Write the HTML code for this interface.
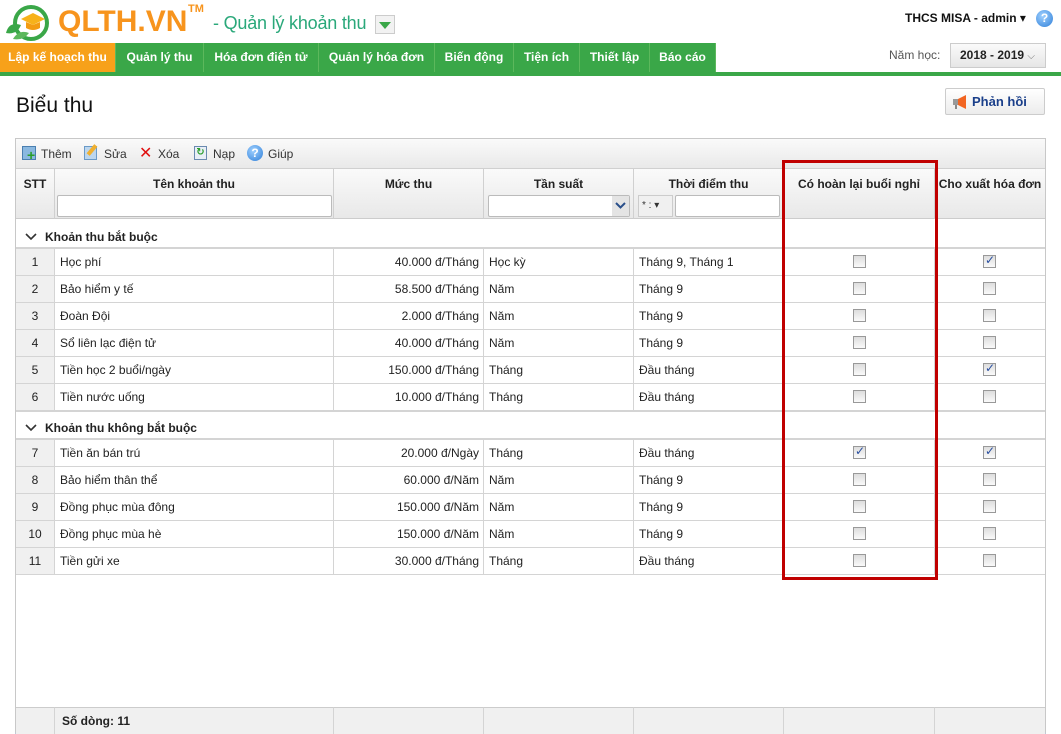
<!DOCTYPE html>
<html><head><meta charset="utf-8"><style>
*{box-sizing:border-box;margin:0;padding:0}
body{width:1061px;height:734px;overflow:hidden;background:#fff;font-family:"Liberation Sans","DejaVu Sans",sans-serif;font-size:12px;color:#222;position:relative}
.a{position:absolute}
.tab{position:absolute;top:43px;height:29px;line-height:29px;color:#fff;font-weight:bold;font-size:12px;text-align:center;border-right:1px solid #5cb85c}
.c{position:absolute;height:27px;line-height:26px;border-right:1px solid #d4d4d4;border-bottom:1px solid #d4d4d4;padding:0 5px;white-space:nowrap;overflow:hidden}
.cb{position:absolute;width:13px;height:13px;border:1px solid #999;background:linear-gradient(#ddd,#fafafa)}
.ck::after{content:"✓";position:absolute;left:1px;top:-3px;font-size:12px;color:#2a4fa0;font-weight:bold}
.h{position:absolute;top:169px;height:50px;background:linear-gradient(#fafafa,#e8e8e8);border-right:1px solid #d0d0d0;border-bottom:1px solid #ccc;font-weight:bold;text-align:center;padding-top:8px;font-size:12px}
.f{position:absolute;top:707px;height:27px;background:#f0f0f0;border-right:1px solid #d4d4d4;border-top:1px solid #ccc}
</style></head><body>
<svg class="a" style="left:3px;top:3px" width="52" height="40" viewBox="0 0 52 40">
<circle cx="28" cy="20" r="16" fill="none" stroke="#3aa748" stroke-width="4"/>
<path d="M3 30 Q6 18 18 22 Q14 32 3 30Z" fill="#3aa748"/>
<path d="M10 36 Q16 26 26 30 Q20 38 10 36Z" fill="#5cb85c"/>
<path d="M18 16 L30 10 L42 16 L30 22Z" fill="#f7b21a"/>
<path d="M23 19 L23 25 Q30 29 37 25 L37 19 L30 22Z" fill="#f39c12"/>
</svg>
<div class="a" style="left:58px;top:5px;font-size:30px;font-weight:bold;color:#f7941d">QLTH.VN</div>
<div class="a" style="left:188px;top:3px;font-size:11px;font-weight:bold;color:#f7941d">TM</div>
<div class="a" style="left:213px;top:13px;font-size:18px;color:#2aa87a;letter-spacing:-0.2px">- Quản lý khoản thu</div>
<div class="a" style="left:375px;top:15px;width:20px;height:19px;border:1px solid #ccc;background:#f2f2f2"><div class="a" style="left:3px;top:6px;border-left:6px solid transparent;border-right:6px solid transparent;border-top:7px solid #3aa748"></div></div>
<div class="a" style="left:905px;top:11px;font-weight:bold;font-size:12px;color:#111">THCS MISA - admin ▾</div>
<div class="a" style="left:1036px;top:10px;width:17px;height:17px;border-radius:50%;background:radial-gradient(circle at 40% 35%,#9fd0ff,#2f7fd8);color:#fff;font-weight:bold;font-size:12px;text-align:center;line-height:17px">?</div>
<div class="a" style="left:0;top:72px;width:1061px;height:4px;background:#3aa748"></div>
<div class="tab" style="left:0;width:116px;background:#f7a11a">Lập kế hoạch thu</div>
<div class="tab" style="left:116px;width:88px;background:#3aa748">Quản lý thu</div>
<div class="tab" style="left:204px;width:115px;background:#3aa748">Hóa đơn điện tử</div>
<div class="tab" style="left:319px;width:116px;background:#3aa748">Quản lý hóa đơn</div>
<div class="tab" style="left:435px;width:79px;background:#3aa748">Biến động</div>
<div class="tab" style="left:514px;width:66px;background:#3aa748">Tiện ích</div>
<div class="tab" style="left:580px;width:70px;background:#3aa748">Thiết lập</div>
<div class="tab" style="left:650px;width:66px;background:#3aa748">Báo cáo</div>
<div class="a" style="left:889px;top:48px;color:#555">Năm học:</div>
<div class="a" style="left:950px;top:43px;width:96px;height:25px;border:1px solid #ccc;background:linear-gradient(#fafafa,#e6e6e6);font-weight:bold;line-height:23px;padding-left:9px;font-size:12px">2018 - 2019 <span style="font-weight:normal;color:#777;font-size:10px">⌵</span></div>
<div class="a" style="left:16px;top:94px;font-size:21px;color:#111">Biểu thu</div>
<div class="a" style="left:945px;top:88px;width:100px;height:27px;border:1px solid #ccc;border-radius:2px;background:linear-gradient(#fff,#ececec);font-weight:bold;color:#1a3f8a;font-size:13px;line-height:25px;padding-left:26px">Phản hồi</div>
<svg class="a" style="left:952px;top:95px" width="18" height="14"><rect x="1" y="4" width="5" height="6" fill="#999"/><path d="M6 4 L14 0 L14 14 L6 10Z" fill="#f26522"/><rect x="3" y="10" width="2" height="4" fill="#888"/></svg>
<div class="a" style="left:15px;top:138px;width:1031px;height:596px;border:1px solid #c8c8c8;border-bottom:2px solid #b8cbe0"></div>
<div class="a" style="left:16px;top:139px;width:1029px;height:30px;background:linear-gradient(#fafafa,#e9e9e9);border-bottom:1px solid #d0d0d0"></div>
<div class="a" style="left:22px;top:146px;width:14px;height:14px;background:#8ab8e0;border:1px solid #4a7fb0"></div><div class="a" style="left:27px;top:149px;color:#2a9d2a;font-weight:bold;font-size:14px;line-height:12px">+</div>
<div class="a" style="left:41px;top:147px;color:#333">Thêm</div>
<div class="a" style="left:84px;top:146px;width:13px;height:14px;background:#bcd6ee;border:1px solid #6a9ac8"></div><div class="a" style="left:90px;top:144px;width:4px;height:12px;background:#f0b030;transform:rotate(40deg)"></div>
<div class="a" style="left:104px;top:147px;color:#333">Sửa</div>
<div class="a" style="left:139px;top:143px;color:#e01010;font-size:16px;font-weight:bold">✕</div>
<div class="a" style="left:158px;top:147px;color:#333">Xóa</div>
<div class="a" style="left:194px;top:146px;width:13px;height:14px;background:#e8eef6;border:1px solid #6a8ab0;color:#2a9d2a;font-size:10px;text-align:center;line-height:12px;font-weight:bold">↻</div>
<div class="a" style="left:213px;top:147px;color:#333">Nạp</div>
<div class="a" style="left:247px;top:145px;width:16px;height:16px;border-radius:50%;background:radial-gradient(circle at 40% 35%,#9fd0ff,#2f7fd8);color:#fff;font-weight:bold;text-align:center;line-height:16px">?</div>
<div class="a" style="left:268px;top:147px;color:#333">Giúp</div>
<div class="h" style="left:16px;width:39px">STT</div>
<div class="h" style="left:55px;width:279px">Tên khoản thu</div>
<div class="h" style="left:334px;width:150px">Mức thu</div>
<div class="h" style="left:484px;width:150px">Tần suất</div>
<div class="h" style="left:634px;width:150px">Thời điểm thu</div>
<div class="h" style="left:784px;width:151px">Có hoàn lại buổi nghỉ</div>
<div class="h" style="left:935px;width:110px;border-right:none">Cho xuất hóa đơn</div>
<div class="a" style="left:57px;top:195px;width:275px;height:22px;border:1px solid #bbb;background:#fff;border-radius:2px"></div>
<div class="a" style="left:488px;top:195px;width:142px;height:22px;border:1px solid #bbb;background:#fff;border-radius:2px"></div>
<div class="a" style="left:612px;top:196px;width:17px;height:20px;background:#e4e4e4"></div>
<svg class="a" style="left:615px;top:202px" width="11" height="8"><path d="M1 1 L5.5 5.5 L10 1" stroke="#2a4f8a" stroke-width="2" fill="none"/></svg>
<div class="a" style="left:638px;top:195px;width:35px;height:22px;border:1px solid #ccc;background:#f0f0f0;font-size:10px;line-height:20px;padding-left:3px;color:#333">* : ▾</div>
<div class="a" style="left:675px;top:195px;width:105px;height:22px;border:1px solid #bbb;background:#fff;border-radius:2px"></div>
<div class="a" style="left:16px;top:219px;width:1029px;height:30px;border-bottom:2px solid #d4d4d4"></div>
<svg class="a" style="left:25px;top:233px" width="12" height="8"><path d="M1 1 L6 6 L11 1" stroke="#333" stroke-width="1.6" fill="none"/></svg>
<div class="a" style="left:45px;top:230px;font-weight:bold;font-size:12px">Khoản thu bắt buộc</div>
<div class="a" style="left:16px;top:411px;width:1029px;height:29px;border-bottom:2px solid #d4d4d4;border-top:1px solid #d4d4d4"></div>
<svg class="a" style="left:25px;top:424px" width="12" height="8"><path d="M1 1 L6 6 L11 1" stroke="#333" stroke-width="1.6" fill="none"/></svg>
<div class="a" style="left:45px;top:421px;font-weight:bold;font-size:12px">Khoản thu không bắt buộc</div>
<div id="rows"></div>
<script>
var d=[
[249,1,"Học phí","40.000 đ/Tháng","Học kỳ","Tháng 9, Tháng 1",0,1],
[276,2,"Bảo hiểm y tế","58.500 đ/Tháng","Năm","Tháng 9",0,0],
[303,3,"Đoàn Đội","2.000 đ/Tháng","Năm","Tháng 9",0,0],
[330,4,"Sổ liên lạc điện tử","40.000 đ/Tháng","Năm","Tháng 9",0,0],
[357,5,"Tiền học 2 buổi/ngày","150.000 đ/Tháng","Tháng","Đầu tháng",0,1],
[384,6,"Tiền nước uống","10.000 đ/Tháng","Tháng","Đầu tháng",0,0],
[440,7,"Tiền ăn bán trú","20.000 đ/Ngày","Tháng","Đầu tháng",1,1],
[467,8,"Bảo hiểm thân thể","60.000 đ/Năm","Năm","Tháng 9",0,0],
[494,9,"Đồng phục mùa đông","150.000 đ/Năm","Năm","Tháng 9",0,0],
[521,10,"Đồng phục mùa hè","150.000 đ/Năm","Năm","Tháng 9",0,0],
[548,11,"Tiền gửi xe","30.000 đ/Tháng","Tháng","Đầu tháng",0,0]];
var h="";
d.forEach(function(r){var t=r[0];
h+='<div class="c" style="top:'+t+'px;left:16px;width:39px;background:#f0f0f0;text-align:center">'+r[1]+'</div>';
h+='<div class="c" style="top:'+t+'px;left:55px;width:279px">'+r[2]+'</div>';
h+='<div class="c" style="top:'+t+'px;left:334px;width:150px;text-align:right;padding-right:4px">'+r[3]+'</div>';
h+='<div class="c" style="top:'+t+'px;left:484px;width:150px">'+r[4]+'</div>';
h+='<div class="c" style="top:'+t+'px;left:634px;width:150px">'+r[5]+'</div>';
h+='<div class="c" style="top:'+t+'px;left:784px;width:151px"></div>';
h+='<div class="c" style="top:'+t+'px;left:935px;width:110px;border-right:none"></div>';
h+='<div class="cb'+(r[6]?' ck':'')+'" style="top:'+(t+6)+'px;left:853px"></div>';
h+='<div class="cb'+(r[7]?' ck':'')+'" style="top:'+(t+6)+'px;left:983px"></div>';});
document.getElementById("rows").innerHTML=h;
</script>
<div class="f" style="left:16px;width:39px"></div>
<div class="f" style="left:55px;width:279px;font-weight:bold;padding:6px 0 0 7px">Số dòng: 11</div>
<div class="f" style="left:334px;width:150px"></div>
<div class="f" style="left:484px;width:150px"></div>
<div class="f" style="left:634px;width:150px"></div>
<div class="f" style="left:784px;width:151px"></div>
<div class="f" style="left:935px;width:110px;border-right:none"></div>
<div class="a" style="left:782px;top:160px;width:156px;height:420px;border:3px solid #c00000"></div>
</body></html>
